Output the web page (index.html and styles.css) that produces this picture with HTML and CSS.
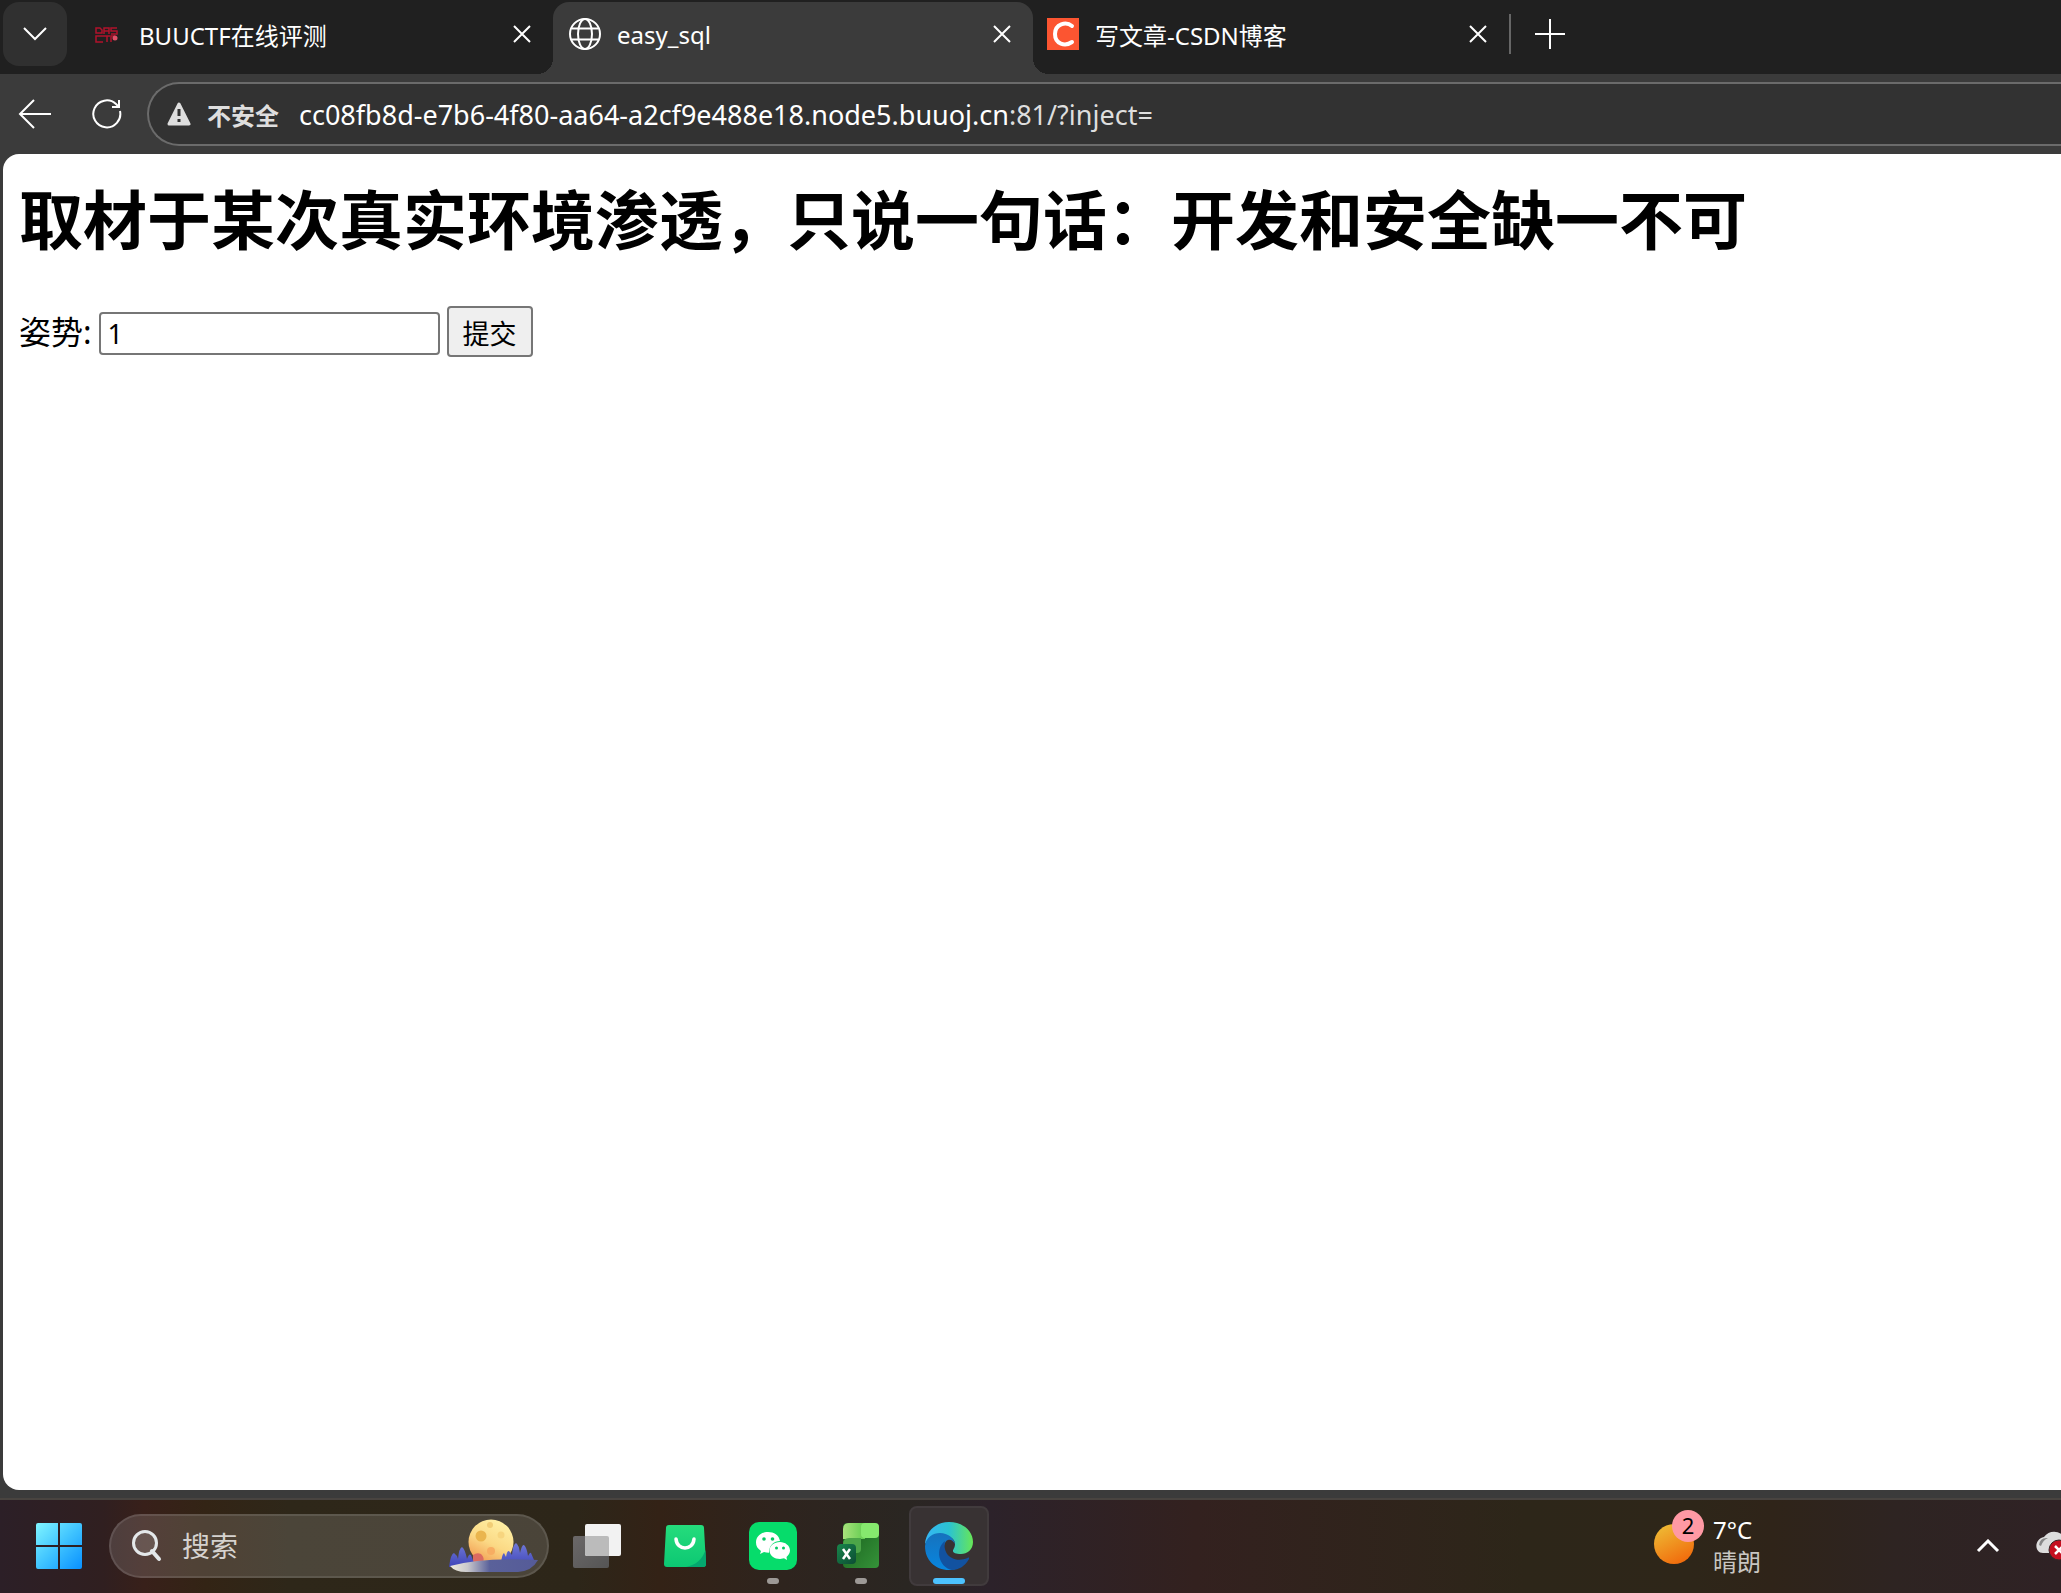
FILE: index.html
```html
<!DOCTYPE html>
<html lang="zh-CN">
<head>
    <meta charset="utf-8">
    <title>easy_sql</title>
    <link rel="stylesheet" href="styles.css">
</head>
<body>
<div class="window">
    <div class="tabs">
        <button class="tabmenu" aria-label="标签页菜单"><svg width="26" height="16" viewBox="0 0 26 16"><path d="M2 2l11 11L24 2" class="line"/></svg></button>
        <div class="tab first">
            <svg width="32" height="32" viewBox="0 0 32 32" fill="none" stroke="#b0122b" stroke-width="1.5">
                <path d="M5 10h4l2 2v3H5zM13 16v-6h5v6M13 13h5M26 10h-6v3h6v3h-6M12 18H5v6h7M12 18h7M16 18v6M20 24v-6h4"/>
                <circle cx="24" cy="20" r="2.500" fill="#e05068" stroke="none"/>
            </svg>
            <span>BUUCTF在线评测</span>
            <button class="close" aria-label="关闭"><svg width="18" height="18" viewBox="0 0 18 18"><path d="M1 1l16 16M17 1L1 17" class="line"/></svg></button>
        </div>
        <div class="tab active">
            <svg width="32" height="32" viewBox="0 0 32 32" fill="none" stroke="#fff" stroke-width="2">
                <circle cx="16" cy="16" r="15"/><ellipse cx="16" cy="16" rx="7" ry="15"/><path d="M2.500 10.500h27M2.500 21.500h27"/>
            </svg>
            <span>easy_sql</span>
            <button class="close" aria-label="关闭"><svg width="18" height="18" viewBox="0 0 18 18"><path d="M1 1l16 16M17 1L1 17" class="line"/></svg></button>
        </div>
        <div class="tab last">
            <svg width="32" height="32" viewBox="0 0 32 32">
                <path d="M0 0h32v32H0z" fill="#fc5531"/><path d="M25 8C19 3 8 6 8 16s10 13 17 8" fill="none" stroke="#fff" stroke-width="4" stroke-linecap="round"/>
            </svg>
            <span>写文章-CSDN博客</span>
            <button class="close" aria-label="关闭"><svg width="18" height="18" viewBox="0 0 18 18"><path d="M1 1l16 16M17 1L1 17" class="line"/></svg></button>
        </div>
        <button class="newtab" aria-label="新建标签页"><svg width="30" height="30" viewBox="0 0 30 30"><path d="M15 0v30M0 15h30" class="line"/></svg></button>
    </div>
    <div class="toolbar">
        <button aria-label="返回"><svg width="34" height="30" viewBox="0 0 34 30"><path d="M16 1L2 15l14 14M2 15h31" class="line"/></svg></button>
        <button aria-label="刷新"><svg width="30" height="30" viewBox="0 0 30 30"><path d="M28 12a13.500 13.500 0 1 1-4-7l3 3M27 1v7h-7" class="line"/></svg></button>
        <div class="address">
            <svg width="24" height="24" viewBox="0 0 24 24"><path d="M12 2L22 22H2z" fill="#dedede" stroke="#dedede" stroke-width="3" stroke-linejoin="round"/><path d="M12 7v7M12 17v3" stroke="#333" stroke-width="3"/></svg>
            <b>不安全</b>
            <span class="url">cc08fb8d-e7b6-4f80-aa64-a2cf9e488e18.node5.buuoj.cn<i>:81/?inject=</i></span>
        </div>
    </div>
    <div class="page">
        <h1>取材于某次真实环境渗透，只说一句话：开发和安全缺一不可</h1>
        <form onsubmit="return false">
            <label for="inject">姿势:</label>
            <input type="text" id="inject" name="inject" value="1">
            <input type="submit" value="提交">
        </form>
    </div>
    <div class="taskbar">
        <button class="start" aria-label="开始">
            <svg width="46" height="46" viewBox="0 0 46 46">
                <defs><linearGradient id="win" x2="46" y2="46" gradientUnits="userSpaceOnUse"><stop stop-color="#80f5ff"/><stop offset=".5" stop-color="#40c4ff"/><stop offset="1" stop-color="#0890ff"/></linearGradient></defs>
                <path d="M2 0h20v22H0V2q0-2 2-2zM24 0h20q2 0 2 2v20H24zM0 24h22v22H2q-2 0-2-2zM24 24h22v20q0 2-2 2H24z" fill="url(#win)"/>
            </svg>
        </button>
        <div class="search">
            <svg width="30" height="32" viewBox="0 0 30 32" fill="none" stroke="#e4e8ea" stroke-width="3"><circle cx="13" cy="13" r="11.500" fill="#fff" fill-opacity=".12"/><path d="M20 21l7 8" stroke-width="4" stroke-linecap="round"/></svg>
            <input type="text" placeholder="搜索" aria-label="搜索">
            <svg width="90" height="54" viewBox="0 0 90 54">
                <defs>
                    <linearGradient id="moon" x1=".8" y1="0" x2=".3" y2="1"><stop stop-color="#fff2a8"/><stop offset=".55" stop-color="#fbd985"/><stop offset="1" stop-color="#f29a50"/></linearGradient>
                    <linearGradient id="hill"><stop stop-color="#f1eddc"/><stop offset=".2" stop-color="#c9c8cc"/><stop offset=".45" stop-color="#5a619a"/><stop offset="1" stop-color="#555b98"/></linearGradient>
                    <linearGradient id="tree" x2="0" y2="1"><stop stop-color="#7079d8"/><stop offset="1" stop-color="#3f45b8"/></linearGradient>
                </defs>
                <circle cx="42" cy="23" r="22.500" fill="url(#moon)"/>
                <circle cx="32" cy="17" r="5.500" fill="#eab54e"/><circle cx="41" cy="6" r="3" fill="#f1cd76"/><circle cx="52" cy="16" r="3.500" fill="#f7d57f"/><circle cx="42" cy="32" r="4" fill="#f7ad62"/>
                <path d="M24 36q4-3 8-1 4 4 2 8H24z" fill="#db6a61"/>
                <path d="M0 48q2-14 5-14 3 2 4 6 1-11 4-12 3 2 5 12 2-6 4-4l3 8zM52 44q1-9 3-10l2 4q1-7 3-6l3 4q1-11 4-12 3 2 4 10 2-9 4-8 3 3 4 11 2-4 3-3l3 7z" fill="url(#tree)"/>
                <path d="M1 47Q34 38 89 41q-6 11-20 12H17Q6 53 1 47z" fill="url(#hill)"/>
            </svg>
        </div>
        <div class="apps">
            <button aria-label="任务视图"><svg width="48" height="48" viewBox="0 0 48 48">
                <defs><linearGradient id="gl" x2="1" y2="1"><stop stop-color="#6b6868"/><stop offset="1" stop-color="#555"/></linearGradient></defs>
                <rect x="0" y="14" width="36" height="32" rx="2" fill="url(#gl)"/><rect x="12" y="2" width="36" height="32" rx="2" fill="#f2f2f2"/><path d="M12 14h22q2 0 2 2v18H14q-2 0-2-2z" fill="#bbb"/>
            </svg></button>
            <button aria-label="应用商店"><svg width="48" height="48" viewBox="0 0 48 48">
                <defs><linearGradient id="bag" x2="0" y2="1"><stop stop-color="#25dc7c"/><stop offset="1" stop-color="#0cc873"/></linearGradient></defs>
                <path d="M8 3h32q3 0 3 3l2 36q0 3-3 3H6q-3 0-3-3L5 6q0-3 3-3z" fill="url(#bag)"/><path d="M44.500 28L45 42q0 3-3 3H25q15-3 19.500-17z" fill="#04a86f"/><path d="M15 17c1 12 17 12 18 0" fill="none" stroke="#fff" stroke-width="3.500" stroke-linecap="round"/>
            </svg></button>
            <button class="running" aria-label="微信"><svg width="48" height="48" viewBox="0 0 48 48">
                <rect width="48" height="48" rx="10" fill="#06dc6b"/>
                <path d="M19 10c-7 0-12 4.500-12 10.500 0 3.500 1.500 6 5 8.500l-1 3 4-2q2 .8 5 .8C20 23 25 19 31 19 30 13 25 10 19 10z" fill="#fff"/>
                <path d="M31 20c-6 0-10.500 4-10.500 8.500 0 5 5 8.500 10.500 8.500l4-.7 3 1.700-.5-3c2-2 3.500-4 3.500-6.500 0-5-5-8.500-10-8.500z" fill="#fff"/>
                <g fill="#06c862"><circle cx="15" cy="17" r="1.800"/><circle cx="23.500" cy="17" r="1.800"/><circle cx="27.500" cy="26" r="1.500"/><circle cx="34.500" cy="26" r="1.500"/></g>
            </svg></button>
            <button class="running" aria-label="Excel"><svg width="48" height="48" viewBox="0 0 48 48">
                <defs><linearGradient id="xl" x2="1" y2="1"><stop stop-color="#175c1b"/><stop offset="1" stop-color="#359339"/></linearGradient><linearGradient id="xb" x2="1" y2="1"><stop stop-color="#18864b"/><stop offset="1" stop-color="#0c4c34"/></linearGradient><linearGradient id="xt"><stop stop-color="#a9e27c"/><stop offset="1" stop-color="#62cc50"/></linearGradient></defs>
                <rect x="6" y="1" width="36" height="45" rx="4" fill="url(#xl)"/><path d="M12 1h16v16H6V7q0-6 6-6z" fill="url(#xt)"/><rect x="24" y="1" width="18" height="15" rx="4" fill="#86e96e"/><path d="M6 22q0-6 6-6h12v11q0 4-4 4H6z" fill="#4ca548"/>
                <rect y="22" width="19" height="20" rx="4" fill="url(#xb)"/><path d="M6 27l7 10M13 27L6 37" stroke="#fff" stroke-width="2.500"/>
            </svg></button>
            <button class="running current" aria-label="Microsoft Edge"><svg width="48" height="48" viewBox="0 0 48 48">
                <defs><linearGradient id="e1"><stop stop-color="#35b5f5"/><stop offset=".5" stop-color="#2bc3d2"/><stop offset="1" stop-color="#67e657"/></linearGradient><linearGradient id="e2" x2="0" y2="1"><stop stop-color="#1672bd"/><stop offset="1" stop-color="#0786e0"/></linearGradient></defs>
                <path d="M0 22C1 9 11 0 24 0c14 0 24 9 24 20 0 8-6 12-12 12-5 0-8-1-8-3s2-3 2-7C30 12 9 8 0 22z" fill="url(#e1)"/>
                <path d="M0 24C1 15 8 11 15 11c8 0 14 5 15 11-2-4-5-5-7-4-7 2-7 26 12 27-3 2-7 3-11 3C10 48 0 38 0 24z" fill="url(#e2)"/>
                <path d="M20 19c-10 7-7 26 7 29 7 0 13-4 17-11 .5-1-.5-2-1.500-1C31 41 17 35 20 19z" fill="#1252a0"/>
            </svg></button>
        </div>
        <button class="weather">
            <svg width="50" height="74" viewBox="0 0 50 74"><defs><linearGradient id="sun" x1=".2" y1="0" x2=".7" y2="1"><stop stop-color="#eebc35"/><stop offset="1" stop-color="#f1690b"/></linearGradient></defs><circle cx="20" cy="35" r="20" fill="url(#sun)"/><circle cx="34" cy="17" r="16" fill="#ff99a4"/><text x="34" y="25" text-anchor="middle" class="count">2</text></svg>
            <span>7°C<em>晴朗</em></span>
        </button>
        <div class="tray">
            <button aria-label="显示隐藏的图标"><svg width="24" height="14" viewBox="0 0 24 14"><path d="M2 12L12 2l10 10" class="line bold"/></svg></button>
            <svg width="25" height="30" viewBox="0 0 25 30"><path d="M7 22C-2 22-2 8 8 6c6-9 20-6 22 4v12z" fill="#ddd"/><path d="M3 14q1-8 9-7-5 2-7 8z" fill="#888"/><circle cx="23" cy="19" r="10" fill="#c50f1f" stroke="#392628" stroke-width="1"/><path d="M19 15l8 8M27 15l-8 8" stroke="#fff" stroke-width="2.500"/></svg>
        </div>
    </div>
</div>
</body>
</html>
```

FILE: styles.css
```css
*{
    box-sizing: border-box;
}
body{
    margin: 0;
    background-color: #3b3b3b;
    font-family: "Noto Sans", "Noto Sans CJK SC", sans-serif;
    color: #fff;
}
button{
    padding: 0;
    border: 0;
    background: transparent;
    color: inherit;
    font-family: inherit;
}
svg{
    display: block;
    flex: none;
}
.line{
    fill: none;
    stroke: #fff;
    stroke-width: 2;
}
.bold{
    stroke-width: 3;
}
.window{
    height: 100vh;
    display: flex;
    flex-direction: column;
    overflow: hidden;
}
.tabs{
    display: flex;
    height: 74px;
    padding: 2px 0 0 3px;
    background-color: #202020;
}
.tabmenu{
    display: flex;
    align-items: center;
    justify-content: center;
    width: 64px;
    height: 64px;
    border-radius: 16px;
    background-color: #303030;
}
.tab{
    display: flex;
    align-items: center;
    width: 480px;
    padding: 0 22px 8px 14px;
    font-size: 24px;
}
.tab span{
    flex: 1;
    margin-left: 16px;
    white-space: nowrap;
}
.first{
    width: 486px;
    padding-left: 24px;
}
.last{
    width: 476px;
}
.active{
    position: relative;
    padding-left: 16px;
    border-radius: 16px 16px 0 0;
    background-color: #3b3b3b;
}
/* 选中标签底部的圆角 */
.active::before,
.active::after{
    content: "";
    position: absolute;
    bottom: 0;
    width: 16px;
    height: 16px;
}
.active::before{
    right: 100%;
    background: radial-gradient(circle at 0 0, #202020 16px, #3b3b3b 16px);
}
.active::after{
    left: 100%;
    background: radial-gradient(circle at 100% 0, #202020 16px, #3b3b3b 16px);
}
.newtab{
    height: 40px;
    margin-top: 12px;
    padding-left: 24px;
    border-left: 2px solid #666;
}
.toolbar{
    display: flex;
    align-items: center;
    gap: 40px;
    height: 80px;
    padding-left: 18px;
}
.address{
    flex: 1;
    display: flex;
    align-items: center;
    height: 64px;
    margin-left: -15px;
    padding-left: 18px;
    border: 2px solid #6b6b6b;
    border-right: 0;
    border-radius: 32px 0 0 32px;
    background-color: #323232;
    font-size: 27px;
}
.address b{
    margin: 0 20px 0 16px;
    font-size: 24px;
    color: #dedede;
}
.url i{
    font-style: normal;
    color: #dedede;
}
.page{
    flex: 1;
    margin: 0 0 8px 3px;
    padding: 16px;
    border-radius: 16px 0 0 16px;
    background-color: #fff;
    color: #000;
}
.page h1{
    margin: 0 0 44px;
    font-family: "Noto Sans CJK SC", sans-serif;
    font-size: 64px;
    line-height: 92px;
}
.page form{
    display: flex;
    align-items: baseline;
    gap: 7px;
    font-size: 32px;
    line-height: 44px;
}
.page input{
    border: 2px solid #767676;
    border-radius: 4px;
    font-family: inherit;
    font-size: 27px;
    color: #000;
}
.page input[type=text]{
    width: 341px;
    height: 43px;
    padding: 0 7px;
}
.page input[type=submit]{
    height: 51px;
    padding: 2px 14px 0;
    background-color: #efefef;
}
.taskbar{
    display: flex;
    align-items: center;
    height: 95px;
    padding: 0 0 2px 36px;
    border-top: 2px solid #494440;
    background: linear-gradient(90deg, #2c1f27 0, #301f20 5%, #38201a 7%, #332415 10%, #2e2719 14%, #2d2619 28%, #332216 32%, #2e241e 38%, #2a2622 44%, #2c222a 48%, #33211f 58%, #2d2619 74%, #2e2619 82%, #2f2419 86%, #2e2422 92%, #2f2225 100%);
}
.search{
    display: flex;
    align-items: center;
    width: 440px;
    height: 64px;
    margin-left: 27px;
    padding: 0 8px 0 21px;
    border: 2px solid rgba(255, 255, 255, .1);
    border-radius: 32px;
    background-color: rgba(255, 255, 255, .14);
}
.search input{
    flex: 1;
    min-width: 0;
    margin-left: 20px;
    padding: 0;
    border: 0;
    background: transparent;
    font-family: inherit;
    font-size: 28px;
}
.search input::placeholder{
    color: #d5d2cf;
}
.apps{
    display: flex;
    gap: 8px;
    margin-left: 8px;
}
.apps button{
    position: relative;
    display: flex;
    align-items: center;
    justify-content: center;
    width: 80px;
    height: 80px;
    border-radius: 8px;
}
.apps .running::after{
    content: "";
    position: absolute;
    bottom: 2px;
    width: 12px;
    height: 6px;
    border-radius: 3px;
    background-color: #9d9996;
}
.apps .current{
    border: 2px solid #413b3d;
    background-color: #383233;
}
.apps .current::after{
    bottom: 0;
    width: 32px;
    background-color: #4cc2ff;
}
.weather{
    display: flex;
    align-items: center;
    gap: 9px;
    margin-left: auto;
    margin-right: 215px;
    font-size: 24px;
    line-height: 32px;
    text-align: left;
}
.weather em{
    display: block;
    font-style: normal;
    color: #c9c6c2;
}
.count{
    font-size: 22px;
}
.tray{
    display: flex;
    align-items: center;
    gap: 36px;
}
```
